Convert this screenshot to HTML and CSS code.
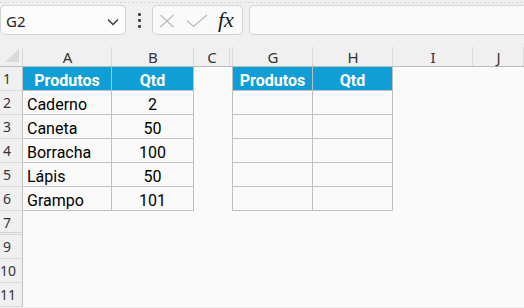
FILE: index.html
```
<!DOCTYPE html>
<html lang="pt">
<head>
<meta charset="utf-8">
<link rel="stylesheet" href="styles.css">
</head>
<body>
<div class="topbar">
  <div class="namebox">
    <span class="ref">G2</span>
    <svg class="chev" width="12" height="8" viewBox="0 0 12 8"><polyline points="1,1.5 6,6.5 11,1.5" fill="none" stroke="#333" stroke-width="1.3"/></svg>
  </div>
  <div class="dots"><i></i><i></i><i></i></div>
  <div class="fbtns">
    <svg class="ico-x" width="16" height="14" viewBox="0 0 16 14"><path d="M1.5 1 L14.5 13 M14.5 1 L1.5 13" stroke="#bcbcbc" stroke-width="1.3" fill="none"/></svg>
    <svg class="ico-ok" width="22" height="14" viewBox="0 0 22 14"><polyline points="1,6.5 7.5,12.5 21,1" stroke="#bcbcbc" stroke-width="1.3" fill="none"/></svg>
    <span class="fx">fx</span>
  </div>
  <div class="fbar"></div>
</div>
<div class="sheet">
  <div class="corner"><span class="tri"></span></div>
  <div class="ch">A</div><div class="ch">B</div><div class="ch hid">C</div><div class="ch">G</div><div class="ch">H</div><div class="ch">I</div><div class="ch">J</div>

  <div class="rh">1</div>
  <div class="c th">Produtos</div><div class="c th">Qtd</div><div class="c edge"></div><div class="c th">Produtos</div><div class="c th">Qtd</div><div class="c"></div><div class="c"></div>

  <div class="rh">2</div>
  <div class="c td">Caderno</div><div class="c td num">2</div><div class="c edge"></div><div class="c td"></div><div class="c td"></div><div class="c"></div><div class="c"></div>

  <div class="rh">3</div>
  <div class="c td">Caneta</div><div class="c td num">50</div><div class="c edge"></div><div class="c td"></div><div class="c td"></div><div class="c"></div><div class="c"></div>

  <div class="rh">4</div>
  <div class="c td">Borracha</div><div class="c td num">100</div><div class="c edge"></div><div class="c td"></div><div class="c td"></div><div class="c"></div><div class="c"></div>

  <div class="rh">5</div>
  <div class="c td">Lápis</div><div class="c td num">50</div><div class="c edge"></div><div class="c td"></div><div class="c td"></div><div class="c"></div><div class="c"></div>

  <div class="rh">6</div>
  <div class="c td">Grampo</div><div class="c td num">101</div><div class="c edge"></div><div class="c td"></div><div class="c td"></div><div class="c"></div><div class="c"></div>

  <div class="rh hidrow">7</div>
  <div class="c"></div><div class="c"></div><div class="c"></div><div class="c"></div><div class="c"></div><div class="c"></div><div class="c"></div>

  <div class="rh">9</div>
  <div class="c"></div><div class="c"></div><div class="c"></div><div class="c"></div><div class="c"></div><div class="c"></div><div class="c"></div>

  <div class="rh">10</div>
  <div class="c"></div><div class="c"></div><div class="c"></div><div class="c"></div><div class="c"></div><div class="c"></div><div class="c"></div>

  <div class="rh">11</div>
  <div class="c"></div><div class="c"></div><div class="c"></div><div class="c"></div><div class="c"></div><div class="c"></div><div class="c"></div>
</div>
</body>
</html>
```
FILE: styles.css
```
* { box-sizing: border-box; }
html, body { margin: 0; padding: 0; }
body {
  width: 524px;
  height: 308px;
  overflow: hidden;
  background: #f0f0f0;
  font-family: "Noto Sans", "Open Sans", sans-serif;
}

.topbar {
  height: 44px;
  display: flex;
  align-items: flex-start;
  padding-top: 5px;
  background-image: linear-gradient(to right, #d6d6d6 50%, transparent 50%);
  background-size: 4px 1px;
  background-repeat: repeat-x;
  background-position: 0 2px;
}

.namebox {
  width: 126px;
  height: 30px;
  border: 1px solid #d3d3d3;
  border-radius: 5px;
  background: #fcfcfc;
  display: flex;
  align-items: center;
  padding: 2px 6px 0 5px;
}
.ref {
  font-size: 15px;
  color: #1e1e1e;
  line-height: 20px;
}
.chev { margin-left: auto; margin-top: 1px; }

.dots {
  width: 26px;
  height: 30px;
  display: flex;
  flex-direction: column;
  align-items: center;
  justify-content: center;
  gap: 3px;
  padding-top: 1px;
}
.dots i {
  display: block;
  width: 3px;
  height: 3px;
  border-radius: 1px;
  background: #444;
}

.fbtns {
  width: 91px;
  height: 30px;
  border: 1px solid #d3d3d3;
  border-radius: 5px;
  background: #fafafa;
  display: flex;
  align-items: center;
  padding-left: 6px;
  padding-top: 1px;
}
.ico-x { margin-right: 11px; }
.ico-ok { margin-right: 10px; }
.fx {
  font-family: "Liberation Serif", "DejaVu Serif", serif;
  font-style: italic;
  font-size: 22px;
  line-height: 20px;
  color: #1a1a1a;
  margin-top: -2px;
}

.fbar {
  flex: 1;
  height: 30px;
  margin-left: 6px;
  margin-right: -10px;
  border: 1px solid #d3d3d3;
  border-radius: 5px;
  background: #fafafa;
}

.sheet {
  display: grid;
  grid-template-columns: 23px 89px 82px 39px 80px 80px 80px 1fr;
  grid-template-rows: 23px repeat(10, 24px);
  background: #fafafa;
}

.corner {
  background-color: #f0f0f0;
  border-bottom: 1px solid #bdbdbd;
  background-image: linear-gradient(#d9d9d9, #d9d9d9);
  background-size: 1px 19px;
  background-position: right bottom;
  background-repeat: no-repeat;
  display: flex;
  padding: 4px 0 0 5px;
}
.tri {
  width: 14px;
  height: 14px;
  background: linear-gradient(to bottom right, transparent 50%, #d9d9d9 50%);
}

.ch {
  background-color: #f0f0f0;
  border-bottom: 1px solid #bdbdbd;
  background-image: linear-gradient(#d9d9d9, #d9d9d9);
  background-size: 1px 19px;
  background-position: right bottom;
  background-repeat: no-repeat;
  text-align: center;
  font-size: 15px;
  line-height: 22px;
  padding-top: 2px;
  color: #333;
}
.ch.hid {
  background-image: linear-gradient(#d9d9d9, #d9d9d9), linear-gradient(#d9d9d9, #d9d9d9);
  background-size: 1px 19px, 1px 19px;
  background-position: right bottom, right 3px bottom;
  padding-right: 3px;
}

.rh {
  background: #f0f0f0;
  border-right: 1px solid #c2c2c2;
  border-bottom: 1px solid #d9d9d9;
  text-align: center;
  padding-right: 8px;
  font-size: 14px;
  line-height: 22px;
  padding-top: 1px;
  color: #333;
}
.rh.hidrow { border-bottom: 3px double #d2d2d2; }

.c {
  font-family: Roboto, "Liberation Sans", sans-serif;
  font-size: 16px;
  line-height: 23px;
  padding: 2px 4px 0 4px;
  color: #000;
  white-space: nowrap;
  overflow: hidden;
}
.td {
  border-right: 1px solid #bfbfbf;
  border-bottom: 1px solid #bfbfbf;
}
.th {
  background: #0f9ed5;
  color: #fff;
  font-weight: bold;
  text-align: center;
  border-right: 1px solid #bfbfbf;
  border-bottom: 1px solid #bfbfbf;
}
.num { text-align: center; }
.edge { border-right: 1px solid #bfbfbf; }
```
